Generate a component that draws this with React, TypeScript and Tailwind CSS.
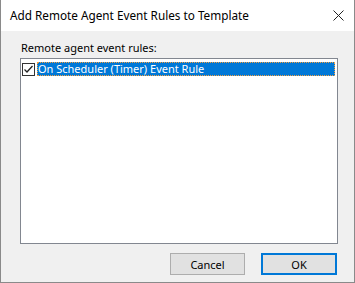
import React from "react";

export default function App() {
  const font = { fontFamily: '"Noto Sans", "Open Sans", sans-serif' };
  return (
    <div className="w-[355px] h-[283px] flex flex-col bg-[#f0f0f0] border-x border-b border-[#8a8a8a] text-[11px] text-black" style={font}>
      <div className="h-[31px] bg-white flex items-center justify-between pl-[9px] pr-[10px] shrink-0">
        <span className="text-[11.75px] leading-none text-black">Add Remote Agent Event Rules to Template</span>
        <svg width="11" height="11" viewBox="0 0 11 11">
          <path d="M0.5 0.5 L10.5 10.5 M10.5 0.5 L0.5 10.5" stroke="#222" strokeWidth="1" />
        </svg>
      </div>
      <div className="flex-1 flex flex-col pl-[19px] pr-[16px] pt-[9px]">
        <div className="leading-[15px] pl-[1px]">Remote agent event rules:</div>
        <div className="mt-[3px] h-[186px] bg-white border border-[#828790] pt-[3px] pl-[1px] pr-[2px]">
          <div className="flex items-center h-[14px]">
            <div className="w-[13px] h-[13px] border border-[#333] bg-white flex items-center justify-center shrink-0">
              <svg width="11" height="11" viewBox="0 0 11 11">
                <path d="M1.5 5.5 L4 8 L9.5 2" stroke="#222" strokeWidth="1.3" fill="none" />
              </svg>
            </div>
            <div className="ml-[2px] flex-1 h-[14px] bg-[#0078d7] text-white leading-[14px] outline-1 outline-dotted outline-[#f5a040] -outline-offset-1 pl-[1px]">
              On Scheduler (Timer) Event Rule
            </div>
          </div>
        </div>
        <div className="flex justify-end gap-[16px] mt-[9px] pr-[1px]">
          <button className="w-[75px] h-[22px] bg-[#e1e1e1] border border-[#adadad] text-[11px] leading-none">Cancel</button>
          <button className="w-[76px] h-[22px] bg-[#e1e1e1] border-2 border-[#0078d7] text-[11px] leading-none">OK</button>
        </div>
      </div>
    </div>
  );
}
